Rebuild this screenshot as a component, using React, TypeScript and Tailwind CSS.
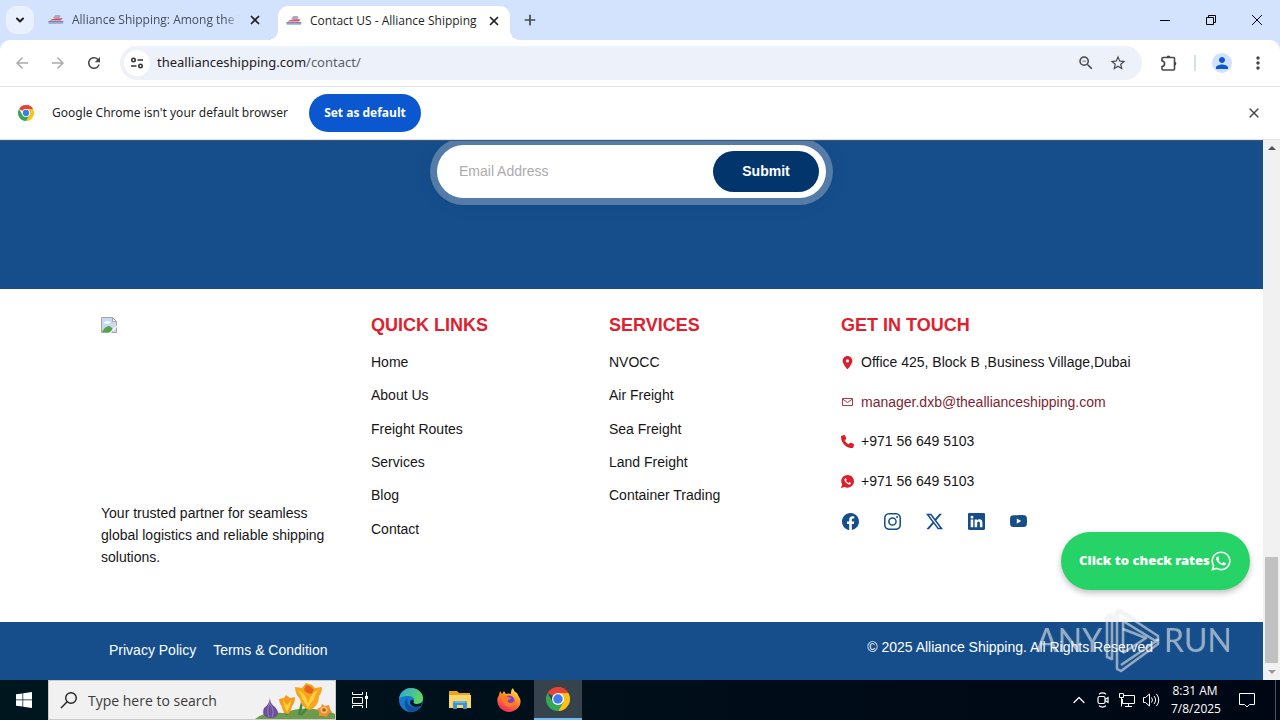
import React from "react";
import { BsFacebook, BsInstagram, BsLinkedin, BsTwitterX, BsYoutube } from "react-icons/bs";
import { FaLocationDot, FaPhone, FaWhatsapp } from "react-icons/fa6";
import { IoLogoWhatsapp } from "react-icons/io";
import { MdArrowBack, MdArrowForward, MdMoreVert, MdPerson, MdRefresh, MdStarOutline, MdZoomOut } from "react-icons/md";
import { ChevronDown, ChevronUp, Plus, X } from "lucide-react";

const quickLinks = ["Home", "About Us", "Freight Routes", "Services", "Blog", "Contact"];
const services = ["NVOCC", "Air Freight", "Sea Freight", "Land Freight", "Container Trading"];

const contacts = [
  { icon: FaLocationDot, text: "Office 425, Block B ,Business Village,Dubai" },
  { icon: Envelope, text: "manager.dxb@theallianceshipping.com", href: "mailto:manager.dxb@theallianceshipping.com" },
  { icon: FaPhone, text: "+971 56 649 5103" },
  { icon: WhatsappSolid, text: "+971 56 649 5103" },
];

const socials = [
  { icon: BsFacebook, label: "Facebook" },
  { icon: BsInstagram, label: "Instagram" },
  { icon: BsTwitterX, label: "X" },
  { icon: BsLinkedin, label: "LinkedIn" },
  { icon: BsYoutube, label: "YouTube" },
];

function Envelope({ size, className }: { size: number; className: string }) {
  return (
    <svg viewBox="0 0 13 13" width={size} height={size} className={className} fill="none" stroke="#a8384a">
      <path d="M1.500 2.500h10v7h-10zM1.500 3l5 3.500 5-3.500" />
    </svg>
  );
}

function WhatsappSolid({ size, className }: { size: number; className: string }) {
  return <IoLogoWhatsapp viewBox="32 32 448 448" size={size} className={className} />;
}

function Favicon() {
  return (
    <svg viewBox="0 0 16 16" className="w-4 h-4 shrink-0">
      <path d="M6 4.500 7.500 3h4l1 1.500-1 1.500H5z" fill="#a3abc4" />
      <path d="M1.500 8.500C6 5.500 11 6.500 14.500 6L13 8.500z" fill="#e0505c" />
      <path d="M.5 9h15l-.5 2.500H.5z" fill="#6f82ad" />
      <path d="M1.500 10.300h13" stroke="#d7def0" strokeWidth="1" strokeDasharray="1 1" />
    </svg>
  );
}

function ChromeLogo({ className }: { className: string }) {
  return (
    <svg viewBox="0 0 48 48" className={className}>
      <path d="M24 24 3.200 12A24 24 0 0 1 44.800 12z" fill="#ea4335" />
      <path d="M24 0a24 24 0 0 1 20.800 12H24z" fill="#ea4335" />
      <path d="M44.800 12A24 24 0 0 1 24 48l10.400-18L24 12z" fill="#fbc116" />
      <path d="M3.200 12A24 24 0 0 0 24 48l10.400-18-10.400 2-10.400-2z" fill="#34a853" />
      <circle cx="24" cy="24" r="12" fill="#fff" />
      <circle cx="24" cy="24" r="9.500" fill="#3b7ded" />
    </svg>
  );
}

function TabStrip() {
  return (
    <div className="flex h-10 bg-[#d3e2fd] text-[#1f1f1f]">
      <button aria-label="Search tabs" className="ml-[6px] mt-[6px] flex h-7 w-7 items-center justify-center rounded-[10px] bg-[#e9f0fe]">
        <ChevronDown size={12} strokeWidth={4} />
      </button>
      <div className="flex w-[244px] items-center pl-[14px] pr-4">
        <Favicon />
        <span className="ml-2 w-[168px] overflow-hidden whitespace-nowrap text-[12px] text-[#474f5e] [mask-image:linear-gradient(to_right,black_92%,transparent)]">
          Alliance Shipping: Among the T
        </span>
        <button aria-label="Close tab" className="ml-[9px]">
          <X size={14} strokeWidth={3} />
        </button>
      </div>
      <div className="relative mt-[6px] flex w-[232px] items-center rounded-t-[10px] bg-white pb-[5px] pl-2">
        <span className="absolute -left-[10px] bottom-0 h-[10px] w-[10px] bg-[radial-gradient(circle_at_0_0,transparent_10px,white_10px)]"></span>
        <span className="absolute -right-[10px] bottom-0 h-[10px] w-[10px] bg-[radial-gradient(circle_at_100%_0,transparent_10px,white_10px)]"></span>
        <Favicon />
        <span className="ml-2 w-[168px] whitespace-nowrap text-[12px]">Contact US - Alliance Shipping</span>
        <button aria-label="Close tab" className="ml-[9px]">
          <X size={14} strokeWidth={3} />
        </button>
      </div>
      <button aria-label="New tab" className="ml-[11px] flex w-[18px] items-center justify-center">
        <Plus size={16} strokeWidth={2.500} className="text-[#474747]" />
      </button>
      <div className="ml-auto flex">
        <button aria-label="Minimize" className="flex w-[46px] items-center justify-center">
          <span className="h-px w-[10px] bg-black"></span>
        </button>
        <button aria-label="Restore" className="flex w-[46px] items-center justify-center">
          <svg viewBox="0 0 10 10" className="h-[10px] w-[10px]" fill="none" stroke="black">
            <path d="M.5 2.500h7v7h-7zM2.500 2.500v-2h7v7h-2" />
          </svg>
        </button>
        <button aria-label="Close window" className="flex w-[46px] items-center justify-center">
          <svg viewBox="0 0 10 10" className="h-[10px] w-[10px]" fill="none" stroke="black">
            <path d="M0 0 10 10M10 0 0 10" />
          </svg>
        </button>
      </div>
    </div>
  );
}

function Toolbar() {
  return (
    <div className="bg-[#d3e2fd]">
      <div className="flex h-[47px] items-center rounded-t-[10px] border-b border-[#e0e4ea] bg-white px-2 text-[#474747]">
        <button aria-label="Back" className="flex w-7 justify-center text-[#ababab]">
          <MdArrowBack size={18} />
        </button>
        <button aria-label="Forward" className="ml-2 flex w-7 justify-center text-[#ababab]">
          <MdArrowForward size={18} />
        </button>
        <button aria-label="Reload" className="ml-2 flex w-7 justify-center">
          <MdRefresh size={18} />
        </button>
        <div className="ml-3 flex h-[34px] min-w-0 flex-1 items-center rounded-full bg-[#edf1fa] pl-1 pr-[15px]">
          <button aria-label="View site information" className="flex h-[26px] w-[26px] shrink-0 items-center justify-center rounded-full bg-white">
            <svg viewBox="0 0 14 14" className="h-[14px] w-[14px]" fill="none" stroke="#333" strokeWidth="1.600">
              <circle cx="3.500" cy="4" r="1.700" />
              <path d="M7.500 4H13M1 10h5.500" />
              <circle cx="10.500" cy="10" r="1.700" />
            </svg>
          </button>
          <div className="ml-[7px] flex-1 whitespace-nowrap font-['Noto_Sans'] text-[13px] text-[#1f2023]">
            theallianceshipping.com<span className="text-[#5b5f67]">/contact/</span>
          </div>
          <button aria-label="Zoom">
            <MdZoomOut size={18} />
          </button>
          <button aria-label="Bookmark this tab" className="ml-[14px]">
            <MdStarOutline size={18} />
          </button>
        </div>
        <button aria-label="Extensions" className="ml-[13px] flex w-7 justify-center">
          <svg viewBox="0 0 18 18" className="h-[18px] w-[18px]" fill="none" stroke="currentColor" strokeWidth="1.600">
            <path d="M3 3.500h10.500q1 0 1 1v10.500q0 1-1 1H3q-1 0-1-1v-2.500q2.600-.4 2.600-2.800T2 7V4.500q0-1 1-1z" strokeLinejoin="round" />
            <path d="M6.500 3.500a1.900 1.900 0 0 1 3.800 0zM14.500 7.700a1.900 1.900 0 0 1 0 3.800z" fill="currentColor" stroke="none" />
          </svg>
        </button>
        <span className="ml-[11px] h-4 w-[2px] bg-[#d5dff2]"></span>
        <button aria-label="Profile" className="ml-4 flex h-5 w-5 items-center justify-center rounded-full bg-[#d0e1fe] text-[#0b57d0]">
          <MdPerson size={18} />
        </button>
        <button aria-label="Menu" className="ml-3 flex w-7 justify-center">
          <MdMoreVert size={20} />
        </button>
      </div>
    </div>
  );
}

function InfoBar() {
  return (
    <div className="flex h-[53px] items-center border-b border-[#dde0e4] bg-white px-[18px]">
      <ChromeLogo className="h-4 w-4" />
      <span className="ml-[18px] min-w-[241px] whitespace-nowrap font-['Noto_Sans'] text-[12px] text-[#1f1f1f]">
        Google Chrome isn't your default browser
      </span>
      <button className="ml-4 h-[38px] w-28 rounded-full bg-[#0b57d0] text-[12px] font-bold text-white">Set as default</button>
      <button aria-label="Dismiss" className="ml-auto text-[#474747]">
        <X size={16} strokeWidth={2} />
      </button>
    </div>
  );
}

function Newsletter() {
  return (
    <section className="h-[149px] overflow-hidden border-t border-[#3f5871] bg-[#154e8b] pt-1">
      <form className="mx-auto flex h-[53px] w-[389px] items-center rounded-full bg-white pl-[22px] pr-[7px] shadow-[0_0_20px_7px_rgba(0,0,0,0.05)] ring-[7px] ring-[#557ba8]">
        <input
          type="email"
          aria-label="Email Address"
          placeholder="Email Address"
          className="min-w-0 flex-1 text-[14px] outline-none placeholder:text-[#acacac]"
        />
        <button type="button" className="h-[41px] w-[106px] rounded-full bg-[#03356d] text-[14px] font-bold text-white">
          Submit
        </button>
      </form>
    </section>
  );
}

function LinkColumn({ title, links }: { title: string; links: string[] }) {
  return (
    <div>
      <h2 className="text-[18px] font-bold leading-6 text-[#e1202e]">{title}</h2>
      <ul className="mt-[9px] grid h-[200px] grid-rows-6">
        {links.map((link) => (
          <li key={link} className="flex items-center">
            <a href="#">{link}</a>
          </li>
        ))}
      </ul>
    </div>
  );
}

function Footer() {
  return (
    <footer>
      <div className="grid h-[333px] grid-cols-[270fr_238fr_232fr_322fr] bg-white pl-[101px] pr-[100px] pt-6 text-[14px] text-[#161616]">
        <div className="pt-1">
          {/* Missing logo placeholder */}
          <svg viewBox="0 0 16 16" role="img" aria-label="Logo" className="h-4 w-4">
            <path d="M.5 .5h11l4 4v11H.5z" fill="#c7d9f4" stroke="#a5a5a5" />
            <path d="M3 6.500q0-2 2-2 1.500-1.500 3 0 1.500.2 1.500 2z" fill="#fff" />
            <path d="M1 15q3-6 7-6 4 1 4 6z" fill="#55a548" />
            <path d="M11.500.5v4h4z" fill="#fff" stroke="#a5a5a5" />
            <path d="M16 8 8 16h2l6-6z" fill="#fff" />
          </svg>
          <p className="mt-[169px] max-w-[236px] leading-[22px]">
            Your trusted partner for seamless global logistics and reliable shipping solutions.
          </p>
        </div>
        <LinkColumn title="QUICK LINKS" links={quickLinks} />
        <LinkColumn title="SERVICES" links={services} />
        <div>
          <h2 className="text-[18px] font-bold leading-6 text-[#e1202e]">GET IN TOUCH</h2>
          <ul className="mt-[6px] grid h-[198px] grid-rows-5">
            {contacts.map((item, index) => {
              const Icon = item.icon;
              return (
                <li key={index} className="flex items-center gap-[7px] whitespace-nowrap">
                  <Icon size={13} className="shrink-0 text-[#dc1f2c]" />
                  {item.href ? (
                    <a href={item.href} className="text-[#7e1f32]">{item.text}</a>
                  ) : (
                    <span>{item.text}</span>
                  )}
                </li>
              );
            })}
            <li className="flex items-center gap-6">
              {socials.map((item) => {
                const Icon = item.icon;
                return (
                  <a key={item.label} href="#" aria-label={item.label} className="flex w-[18px] justify-center text-[#154e8b]">
                    <Icon size={17} />
                  </a>
                );
              })}
            </li>
          </ul>
        </div>
      </div>
      <div className="flex h-[58px] items-start justify-between bg-[#154e8b] pl-[109px] pr-[110px] pt-[15px] text-[14px] font-medium text-white">
        <nav className="flex gap-[17px] leading-[26px]">
          <a href="#">Privacy Policy</a>
          <a href="#">Terms &amp; Condition</a>
        </nav>
        <p className="leading-5">© 2025 Alliance Shipping. All Rights Reserved</p>
      </div>
    </footer>
  );
}

function Scrollbar() {
  return (
    <div className="flex w-[17px] shrink-0 flex-col items-center bg-[#f1f1f1] py-[6px]">
      <svg viewBox="0 0 8 4" className="h-1 w-2">
        <path d="M0 4 4 0l4 4z" fill="#505050" />
      </svg>
      <span className="mt-auto h-[106px] w-[13px] bg-[#c1c1c1]"></span>
      <svg viewBox="0 0 8 4" className="mt-[7px] h-1 w-2">
        <path d="M0 0l4 4 4-4z" fill="#9a9a9a" />
      </svg>
    </div>
  );
}

function Watermark() {
  return (
    <div className="pointer-events-none absolute bottom-[7px] right-12 flex items-center font-['Lato'] text-[32px] font-normal text-white/50 drop-shadow-[0_0_1px_rgba(120,130,140,0.5)]">
      <span>ANY</span>
      <svg viewBox="0 0 58 66" className="mx-[2px] h-[66px] w-[58px]" fill="none" stroke="currentColor" strokeLinejoin="round">
        <path d="M3 10v40l5 2V8zM13 54V6q0-2 3-2l38 25v4H50L19 14v32" strokeWidth="2.500" />
        <path d="M19 46 42 31 19 22M13 54v8l4 2 37-27v-4L17 58" strokeWidth="2.500" />
      </svg>
      <span>RUN</span>
    </div>
  );
}

function Flowers() {
  return (
    <svg viewBox="0 0 80 38" className="h-[38px] w-20 shrink-0">
      <path d="M0 38q10-8 28-6 20-7 36-3 12 1 16 4v5z" fill="#6d9a4b" />
      <path d="M32 34 28 22M44 34l4-16M46 34l13-15M68 34l3-6" stroke="#41863f" strokeWidth="2.500" fill="none" />
      <path d="M15 17q0 6 5 9 7 8-2 11-13 0-9-10 5-3 6-10z" fill="#6b519b" />
      <path d="M15 21q-4 9-1 15M15 23q5 7 2 13" stroke="#9a7cc4" fill="none" />
      <path d="M24 18l5-1 2-3 4 3 5-1q0 6-3 9-1 7-5 8-4-1-5-7-3-4-3-8z" fill="#f59c1f" />
      <path d="M28 18q0 7 4 13 4-6 4-13-2 5-4 6-2-2-4-6z" fill="#ffcf3a" />
      <path d="M40 6l7 1 4-5 6 2 3 3 7-1q0 6-3 9 0 10-9 14-9-2-10-11-5-5-5-12z" fill="#f6a51d" />
      <path d="M43 9q3 4 4 8 4 6 6 11 2-6 6-10 1-5 4-9-5 2-8 8-1 3-2 5-2-9-10-13z" fill="#ffd141" />
      <path d="M49 9l2-5 4 1 4 4-3 4-4-1z" fill="#e7641b" />
      <path d="M67 23l3 2 4-1 1 4 2 3-4 2-1 3-4-1-4 0v-4l-2-3 4-2z" fill="#f08c32" />
      <circle cx="69" cy="29" r="3.500" fill="#f9bd62" />
      <circle cx="69" cy="29" r="1.800" fill="#a55a24" />
    </svg>
  );
}

function Taskbar() {
  return (
    <div className="flex h-10 bg-gradient-to-r from-[#00161f] to-[#000714] text-white">
      <button aria-label="Start" className="flex w-12 items-center justify-center">
        <svg viewBox="0 0 16 16" className="h-4 w-4" fill="white">
          <path d="M0 2.300 6.500 1.400v6.200H0zM7.200 1.300 16 0v7.600H7.200zM0 8.300h6.500v6.300L0 13.700zM7.200 8.300H16V16l-8.800-1.300z" />
        </svg>
      </button>
      <label className="flex w-72 items-center border border-[#c9c9c9] bg-[#f1f1f1] pl-[11px]">
        <svg viewBox="0 0 18 18" className="h-[18px] w-[18px] shrink-0" fill="none" stroke="#222" strokeWidth="1.400">
          <circle cx="11" cy="7" r="5.300" />
          <path d="M7.200 10.800 1 17" />
        </svg>
        <input
          type="text"
          aria-label="Search"
          placeholder="Type here to search"
          className="ml-[10px] min-w-0 flex-1 text-[14px] outline-none placeholder:text-[#3b3b3b]"
        />
        <Flowers />
      </label>
      <button aria-label="Task View" className="mr-[3px] flex w-12 items-center justify-center">
        <svg viewBox="0 0 18 16" className="h-4 w-[18px]" fill="none" stroke="white">
          <path d="M1.500 0v2.500h10V0M1.500 5.500h10v6h-10zM1.500 16v-2.500h10V16M15.500 0v16" />
          <path d="M14 4h3v3h-3z" fill="white" stroke="none" />
        </svg>
      </button>
      <div className="flex gap-px">
        <button aria-label="Microsoft Edge" className="flex w-12 items-center justify-center">
          <svg viewBox="0 0 24 24" className="h-6 w-6">
            <defs>
              <linearGradient id="edgeTop" x1="0" y1="0" x2="1" y2="0.400">
                <stop offset="0" stopColor="#2aa5df" />
                <stop offset="1" stopColor="#5ed75c" />
              </linearGradient>
            </defs>
            <circle cx="12" cy="12" r="12" fill="#1478cf" />
            <path d="M0 11C1 4 6 0 12 0c7 0 12 5 12 10 0 4-3 6-6 6-4 0-4-2-3-3 1-3-2-5-6-5-4 0-8 1-9 3z" fill="url(#edgeTop)" />
            <path d="M8.500 10C7 17 12 21 21.500 18.500 19 22 16 24 12 24 5 22 4 14 8.500 10z" fill="#124f9b" />
            <path d="M15 13c-1 1-1 3 3 3 2 0 4-.6 5.500-2.200L22 18c-6 2-11 0-11-4 0-2 2-3 4-1z" fill="#00161f" />
          </svg>
        </button>
        <button aria-label="File Explorer" className="flex w-12 items-center justify-center">
          <svg viewBox="0 0 22 20" className="h-5 w-[22px]">
            <path d="M0 1h8l2 2h11v4H0z" fill="#e8a51f" />
            <path d="M0 5h22v13H0z" fill="#fcd667" />
            <path d="M4 19v-6q0-2 2-2h10q2 0 2 2v6h-4v-4H8v4z" fill="#3a94d5" />
            <path d="M6 11h10v2H6z" fill="#65b8ed" />
          </svg>
        </button>
        <button aria-label="Firefox" className="flex w-12 items-center justify-center">
          <svg viewBox="0 0 24 24" className="h-6 w-6">
            <defs>
              <linearGradient id="fox" x1="0.800" y1="0" x2="0.300" y2="1">
                <stop offset="0" stopColor="#fff04a" />
                <stop offset="0.450" stopColor="#ff8b23" />
                <stop offset="1" stopColor="#f02463" />
              </linearGradient>
            </defs>
            <path d="M3 3l2 3 2-3 2 3q3-1 5 0-.5-4 2-6 1 4 4 5l1.500 3Q26 14 21 20q-9 8-18 0-5-7-1-13z" fill="url(#fox)" />
            <circle cx="12" cy="13" r="5.500" fill="#7a3fd2" />
            <path d="M5 8q4-1 6 1l3 1q-1 2-3 2-1 2 2 3 3 0 4-2 1 6-5 6-7-1-7-11z" fill="#ff7b25" />
          </svg>
        </button>
        <button aria-label="Google Chrome" className="flex w-12 items-center justify-center border-b-2 border-[#76b9ed] bg-[#36434c]">
          <ChromeLogo className="h-6 w-6" />
        </button>
      </div>
      <div className="ml-auto flex items-center">
        <button aria-label="Show hidden icons" className="flex w-6 justify-center">
          <ChevronUp size={20} strokeWidth={1.500} />
        </button>
        <button aria-label="Meet Now" className="flex w-6 justify-center">
          <svg viewBox="0 0 16 16" className="h-4 w-4" fill="none" stroke="white" strokeWidth="1.200">
            <rect x="3" y="4.500" width="7" height="7" rx="1.500" />
            <path d="M10 7.500 13 5.500v5L10 8.500M4 2.200q3.500-2.500 7 0M4 13.800q3.500 2.500 7 0" />
          </svg>
        </button>
        <button aria-label="Network" className="flex w-6 justify-center">
          <svg viewBox="0 0 16 16" className="h-4 w-4" fill="none" stroke="white">
            <path d="M5 3.500h10.500v8H3.500V7M6 14.500h7M9.500 11.500v3M.5 1.500h4v4h-4zM2.500 5.500v9" />
          </svg>
        </button>
        <button aria-label="Volume" className="flex w-6 justify-center">
          <svg viewBox="0 0 17 16" className="h-4 w-[17px]" fill="none" stroke="white">
            <path d="M.5 5.500h2l4-3.500v12l-4-3.500h-2zM8.500 5.500q2 2.500 0 5M11 4q3.200 4 0 8M13.500 2q4.500 6 0 12" />
          </svg>
        </button>
        <div className="ml-2 w-12 whitespace-nowrap text-center text-[12px] leading-[18px]">
          <div>8:31 AM</div>
          <div>7/8/2025</div>
        </div>
        <button aria-label="Notifications" className="ml-[10px] flex w-9 justify-center">
          <svg viewBox="0 0 16 16" className="h-4 w-4" fill="none" stroke="white">
            <path d="M.5 1.500h15v11h-5L8 15l-2.500-2.500h-5z" />
          </svg>
        </button>
        <span className="ml-[10px] mr-1 h-10 w-px bg-[#4a535e]"></span>
      </div>
    </div>
  );
}

export default function App() {
  return (
    <div className="flex min-h-screen flex-col bg-white font-['Open_Sans','Noto_Sans',sans-serif]">
      <TabStrip />
      <Toolbar />
      <InfoBar />
      <main className="relative flex flex-1">
        <div className="min-w-0 flex-1 font-['Liberation_Sans',Arial,sans-serif]">
          <Newsletter />
          <Footer />
        </div>
        <Scrollbar />
        <a
          href="#"
          className="absolute bottom-[90px] right-[30px] flex h-[58px] w-[189px] items-center rounded-full bg-[#25d366] pl-[18px] font-['Noto_Sans'] text-[13px] font-black text-white shadow-[0_3px_6px_rgba(0,0,0,0.25)]"
        >
          <span className="whitespace-nowrap">Click to check rates</span>
          <FaWhatsapp size={22} className="shrink-0" />
        </a>
        <Watermark />
      </main>
      <Taskbar />
    </div>
  );
}
